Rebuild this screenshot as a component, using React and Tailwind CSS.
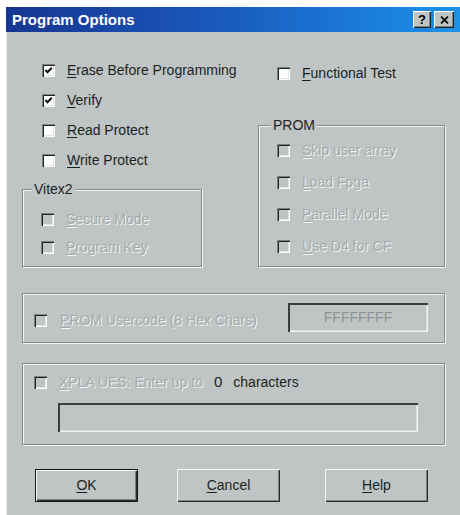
import React from "react";

const FACE = "bg-[#bfc5c5]";

function Mnemonic({ text }) {
    return (
        <>
            <span className="underline underline-offset-2">{text[0]}</span>
            {text.slice(1)}
        </>
    );
}

function CheckBox({ checked, disabled }) {
    return (
        <div
            className={`w-[13px] h-[13px] shrink-0 flex items-center justify-center ${
                disabled ? FACE : "bg-white"
            } shadow-[inset_1px_1px_0_#7c8282,inset_2px_2px_0_#202424,inset_-1px_-1px_0_#ffffff,inset_-2px_-2px_0_#dde2e2]`}
        >
            {checked && (
                <svg width="9" height="9" viewBox="0 0 9 9">
                    <path d="M1.5 4 L3.5 6.2 L7.8 1.8" fill="none" stroke="#111" strokeWidth="2" />
                </svg>
            )}
        </div>
    );
}

function Option({ label, checked, disabled, rowClass }) {
    return (
        <div className={`flex items-center gap-[12px] ${rowClass}`}>
            <CheckBox checked={checked} disabled={disabled} />
            <span
                className={
                    disabled
                        ? "text-[#a4aaaa] [text-shadow:1px_1px_0_#f4f6f6]"
                        : "text-[#1c1f1f]"
                }
            >
                <Mnemonic text={label} />
            </span>
        </div>
    );
}

function GroupBox({ title, className, children }) {
    return (
        <div
            className={`relative border border-[#868c8c] shadow-[inset_1px_1px_0_#f2f4f4,1px_1px_0_#f2f4f4] ${className}`}
        >
            {title && (
                <span className={`absolute -top-[10px] ${FACE} px-[2px] text-[#1c1f1f] leading-[18px]`}>
                    {title}
                </span>
            )}
            {children}
        </div>
    );
}

function EditBox({ className, children }) {
    return (
        <div
            className={`h-[29px] flex items-center justify-center text-[#8e9494] shadow-[inset_2px_2px_0_#3a3e3e,inset_-1px_-1px_0_#f2f4f4,inset_-2px_-2px_0_#d8dddd] ${className}`}
        >
            {children}
        </div>
    );
}

function Button({ label, isDefault, className }) {
    return (
        <button
            className={`w-[103px] h-[33px] ${FACE} text-[#1c1f1f] ${
                isDefault ? "border border-[#141616]" : ""
            } shadow-[inset_1px_1px_0_#f4f6f6,inset_-1px_-1px_0_#2a2e2e,inset_-2px_-2px_0_#7c8282] ${className}`}
        >
            <Mnemonic text={label} />
        </button>
    );
}

export default function App() {
    return (
        <div
            className="w-[460px] h-[515px] bg-white pl-[6px] pt-[7px] flex text-[14px]"
            style={{ fontFamily: '"Liberation Sans", Arial, sans-serif' }}
        >
            <div className={`flex-1 flex flex-col ${FACE} shadow-[inset_1px_0_0_#e8ecec]`}>
                {/* caption */}
                <div className="h-[25px] flex items-center pl-[6px] pr-[6px] bg-gradient-to-r from-[#163690] via-[#1a5cc0] to-[#1c92e8]">
                    <span className="text-white font-bold text-[15px] leading-none">Program Options</span>
                    <div className="ml-auto flex gap-[3px]">
                        <div className={`w-[18px] h-[17px] ${FACE} flex items-center justify-center font-bold text-[13px] text-black leading-none shadow-[inset_1px_1px_0_#fff,inset_-1px_-1px_0_#222,inset_-2px_-2px_0_#7c8282]`}>
                            ?
                        </div>
                        <div className={`w-[20px] h-[17px] ${FACE} flex items-center justify-center shadow-[inset_1px_1px_0_#fff,inset_-1px_-1px_0_#222,inset_-2px_-2px_0_#7c8282]`}>
                            <svg width="9" height="8" viewBox="0 0 9 8">
                                <path d="M1 0.5 L8 7.5 M8 0.5 L1 7.5" stroke="#111" strokeWidth="1.8" />
                            </svg>
                        </div>
                    </div>
                </div>

                {/* options */}
                <div className="flex pl-[16px] pr-[15px]">
                    <div className="w-[180px] flex flex-col pt-[23px]">
                        <div className="pl-[20px]">
                            <Option label="Erase Before Programming" checked rowClass="h-[30px] whitespace-nowrap" />
                            <Option label="Verify" checked rowClass="h-[30px]" />
                            <Option label="Read Protect" rowClass="h-[30px]" />
                            <Option label="Write Protect" rowClass="h-[30px]" />
                        </div>
                        <GroupBox title="Vitex2" className="mt-[14px] pl-[18px] pt-[15px] pb-[5px] [&>span]:left-[9px]">
                            <Option label="Secure Mode" disabled rowClass="h-[28px]" />
                            <Option label="Program Key" disabled rowClass="h-[28px]" />
                        </GroupBox>
                    </div>

                    <div className="w-[187px] ml-[56px] flex flex-col pt-[26px]">
                        <div className="pl-[19px]">
                            <Option label="Functional Test" rowClass="h-[30px]" />
                        </div>
                        <GroupBox title="PROM" className="mt-[37px] pl-[18px] pt-[8px] pb-[4px] [&>span]:left-[12px]">
                            <Option label="Skip user array" disabled rowClass="h-[32px]" />
                            <Option label="Load Fpga" disabled rowClass="h-[32px]" />
                            <Option label="Parallel Mode" disabled rowClass="h-[32px]" />
                            <Option label="Use D4 for CF" disabled rowClass="h-[32px]" />
                        </GroupBox>
                    </div>
                </div>

                {/* usercode */}
                <div className="px-[16px] pr-[15px]">
                    <GroupBox className="mt-[26px] flex items-center pl-[11px] pr-[16px] pt-[9px] pb-[10px]">
                        <Option label="PROM Usercode (8 Hex Chars)" disabled rowClass="gap-[13px] mt-[5px] whitespace-nowrap" />
                        <EditBox className="ml-auto w-[140px]">FFFFFFFF</EditBox>
                    </GroupBox>

                    <GroupBox className="mt-[20px] pl-[11px] pr-[26px] pt-[7px] pb-[12px]">
                        <div className="h-[22px] flex items-center whitespace-nowrap">
                            <Option label="XPLA UES: Enter up to" disabled rowClass="gap-[10px]" />
                            <span className="ml-[11px] text-[#1c1f1f] text-[15px]">0</span>
                            <span className="ml-[11px] text-[#1c1f1f]">characters</span>
                        </div>
                        <EditBox className="mt-[10px] ml-[24px]" />
                    </GroupBox>
                </div>

                {/* buttons */}
                <div className="flex pl-[29px] mt-[24px]">
                    <Button label="OK" isDefault />
                    <Button label="Cancel" className="ml-[39px]" />
                    <Button label="Help" className="ml-[45px]" />
                </div>
            </div>
        </div>
    );
}
